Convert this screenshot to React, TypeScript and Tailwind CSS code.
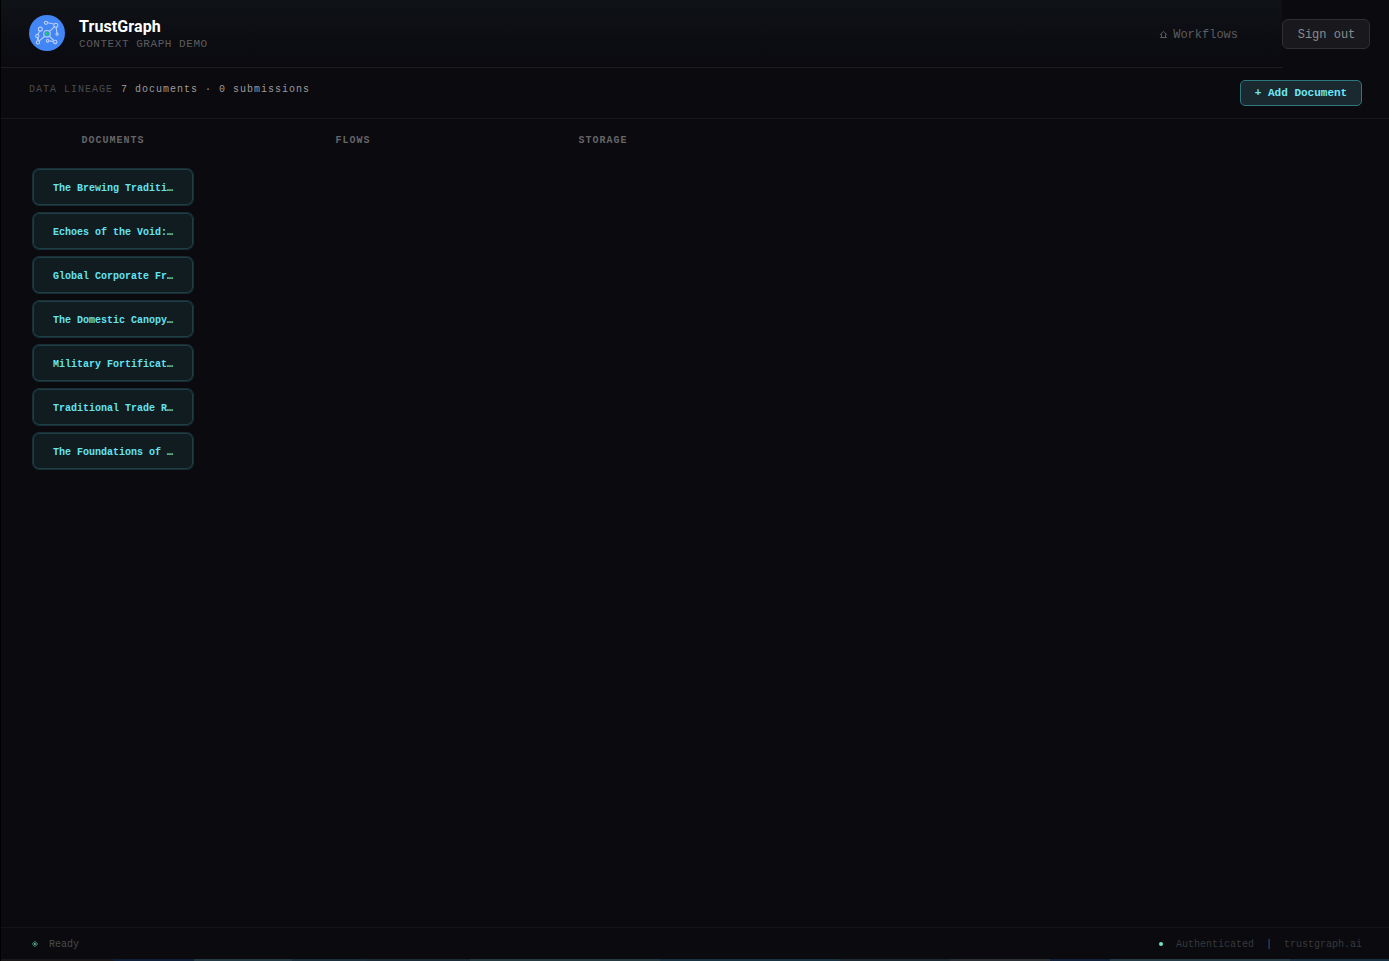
const documents: string[] = [
  'The Brewing Traditi…',
  'Echoes of the Void:…',
  'Global Corporate Fr…',
  'The Domestic Canopy…',
  'Military Fortificat…',
  'Traditional Trade R…',
  'The Foundations of …',
];

function Logo() {
  return (
    <svg width="36" height="36" viewBox="0 0 36 36" className="mb-0.5 shrink-0">
      <circle cx="18" cy="18" r="18" fill="#4285f4" />
      <g fill="none" stroke="#b9cff7" strokeWidth="1.1">
        <path d="M18.7 7.8 24.8 9M25.3 12 20.4 16.4M27 12.2 28 18M15.5 21.5 10 26.2M8.7 25.8 8.4 22.8M9 19.4 10.6 16M9.2 22.6 9.4 25.7M20.5 21.5 24.8 25.5M20.2 25.9 24.4 26.5" />
        <circle cx="17" cy="7.8" r="1.6" />
        <circle cx="26.8" cy="10.2" r="2" />
        <circle cx="28.1" cy="19.2" r="1.1" />
        <circle cx="11.4" cy="14.1" r="2" />
        <circle cx="8.3" cy="21" r="1.6" />
        <circle cx="9" cy="27.4" r="1.6" />
        <circle cx="18.6" cy="25.8" r="1.3" />
        <circle cx="26.2" cy="26.9" r="1.7" />
        <circle cx="18" cy="18.8" r="3.3" />
      </g>
      <path d="M18 16.8v4M16 18.8h4" stroke="#18c878" strokeWidth="1.6" />
    </svg>
  );
}

function Header() {
  return (
    <div className="flex h-[68px] shrink-0 items-center">
      <header className="flex h-[68px] w-[1281px] items-center justify-between border-b border-[#1e1e22] bg-linear-to-b from-[#0f1217] to-[#0a0a0f] pr-11 pl-7">
        <div className="flex items-center gap-3.5">
          <Logo />
          <div className="flex flex-col pt-1">
            <h1 className="h-[18px] font-['Roboto'] text-[16px] leading-[18px] font-bold tracking-[0.1px] text-white">
              TrustGraph
            </h1>
            <span className="h-[17px] text-[11px] leading-[17px] tracking-[0.55px] text-[#5c5c5e]">
              CONTEXT GRAPH DEMO
            </span>
          </div>
        </div>
        <nav className="flex gap-1.5 pt-0.5 text-[12px] leading-4 text-[#5c5c5f]">
          <svg width="8" height="16" viewBox="0 0 8 16" fill="none" stroke="currentColor">
            <path d="M2.5 10.5V7.5L1.4 7.5 4.5 4.4 7.6 7.5H6.5V10.5M1.2 10.5H7.8" />
          </svg>
          <span>Workflows</span>
        </nav>
      </header>
      <button className="h-[30px] w-[88px] rounded-md border border-[#303034] bg-[#19191d] pt-px pl-px text-[12px] text-[#8b8b8e]">
        Sign out
      </button>
    </div>
  );
}

export default function App() {
  return (
    <div className="flex h-[961px] w-[1389px] flex-col overflow-hidden border-l border-black bg-[#0a0a0f] font-['Liberation_Mono',monospace]">
      <Header />
      <section className="flex h-[51px] shrink-0 justify-between border-b border-[#19191d] pt-3 pr-[27px] pl-7">
        <div className="flex h-[19px] items-center gap-2 text-[10px] tracking-[1px]">
          <span className="text-[#4a4a4d]">DATA LINEAGE</span>
          <span className="text-[#9b9b9e]">7 documents · 0 submissions</span>
        </div>
        <button className="h-[26px] w-[122px] rounded-[5px] border border-[#2f7680] bg-[#19292f] pt-px text-[11px] font-bold text-[#6ee7f5]">
          + Add Document
        </button>
      </section>
      <main className="flex flex-1 flex-col pt-[13px] pl-8">
        <div className="flex h-4 items-center text-center text-[10px] font-bold tracking-[1px] text-[#656568]">
          <div className="w-40">DOCUMENTS</div>
          <div className="ml-20 w-40">FLOWS</div>
          <div className="ml-[90px] w-40">STORAGE</div>
        </div>
        <div className="mt-5 -ml-px flex flex-col gap-1.5">
          {documents.map((name) => (
            <div
              key={name}
              className="flex h-[38px] w-[162px] items-center justify-center rounded-[7px] border border-[#182e35] bg-[#111c21] pt-0.5 text-[10px] font-bold whitespace-pre text-[#65e3f0] inset-ring inset-ring-[#1f3e46]"
            >
              {name}
            </div>
          ))}
        </div>
      </main>
      <footer className="flex h-8 shrink-0 items-center justify-between border-t border-[#141418] pr-[27px] pl-[31px] text-[10px] text-[#39393c]">
        <div className="flex items-center gap-[11px]">
          <svg width="6" height="6" viewBox="0 0 6 6">
            <path d="M3 .2 5.8 3 3 5.8.2 3Z" fill="#123027" stroke="#3f8a70" strokeWidth=".8" />
            <circle cx="3" cy="3" r="1.1" fill="#5cb796" />
          </svg>
          <span className="pt-0.5 text-[#4a4a4d]">Ready</span>
        </div>
        <div className="flex items-center">
          <span className="mr-[13px] size-1 rounded-full bg-[#6ee7b7]" />
          <span className="pt-0.5">Authenticated</span>
          <span className="mx-3 pt-px text-[#5a5a5d]">|</span>
          <span className="pt-0.5">trustgraph.ai</span>
        </div>
      </footer>
      <div className="flex h-0.5 shrink-0">
        <div className="w-[113px] bg-[#1a1819]" />
        <div className="w-20 bg-[#11203a]" />
        <div className="w-[98px] bg-[#243a44]" />
        <div className="w-[74px] bg-[#1b303c]" />
        <div className="w-[104px] bg-[#1b2b38]" />
        <div className="w-[190px] bg-[#263a42]" />
        <div className="w-[180px] bg-[#193343]" />
        <div className="w-[110px] bg-[#1d2a33]" />
        <div className="w-[100px] bg-[#2a3036]" />
        <div className="w-[60px] bg-[#11223a]" />
        <div className="w-[180px] bg-[#263c46]" />
        <div className="flex-1 bg-[#172f40]" />
      </div>
    </div>
  );
}
